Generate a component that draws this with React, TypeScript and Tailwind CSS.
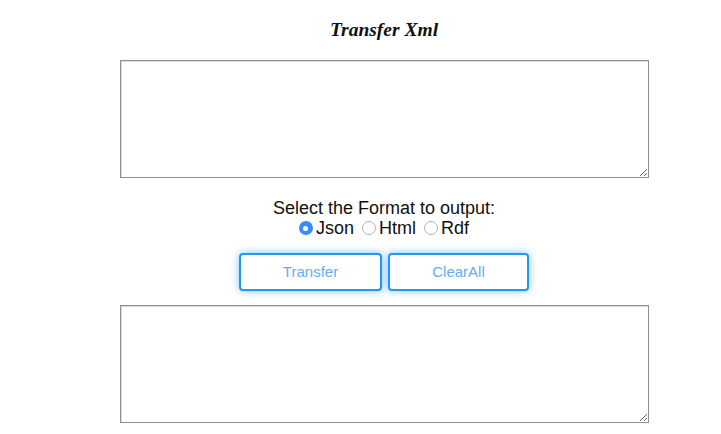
import React, { useState } from 'react';

const formats = ['Json', 'Html', 'Rdf'];

const App = () => {
    const [format, setFormat] = useState('Json');
    const [input, setInput] = useState('');
    const [output, setOutput] = useState('');

    return (
        <div className="w-[721px] h-[434px] bg-white overflow-hidden" style={{ fontFamily: '"Liberation Sans", Arial, sans-serif' }}>
            <div className="ml-[119px] w-[530px] flex flex-col items-center">
                <h1 className="mt-[18px] h-[24px] leading-[24px] text-[19.5px] font-bold italic text-[#111] font-['Liberation_Serif',serif]">
                    Transfer Xml
                </h1>
                <textarea
                    value={input}
                    onChange={(e) => setInput(e.target.value)}
                    className="mt-[18px] w-[529px] h-[118px] border border-[#8f8f8f] shadow-[inset_1px_1px_1px_rgba(0,0,0,0.15)] bg-white block"
                />
                <p className="mt-[20px] text-[18px] leading-[20px] text-[#111]">Select the Format to output:</p>
                <div className="flex items-center gap-[8px] text-[18px] leading-[20px] text-[#111]">
                    {formats.map((f) => (
                        <label key={f} className="flex items-center gap-[3px]">
                            <span
                                onClick={() => setFormat(f)}
                                className={`w-[14px] h-[14px] rounded-full flex items-center justify-center ${format === f ? 'bg-[#3b8df6]' : 'border border-[#b5b5b5] bg-white'}`}
                            >
                                {format === f && <span className="w-[5px] h-[5px] rounded-full bg-white" />}
                            </span>
                            {f}
                        </label>
                    ))}
                </div>
                <div className="mt-[15px] flex gap-[6px]">
                    <button className="w-[143px] h-[38px] rounded-[4px] border-2 border-[#2196f3] bg-white text-[15px] text-[#64acf3] shadow-[0_0_8px_rgba(33,150,243,0.55)]">
                        Transfer
                    </button>
                    <button onClick={() => { setInput(''); setOutput(''); }} className="w-[141px] h-[38px] rounded-[4px] border-2 border-[#2196f3] bg-white text-[15px] text-[#64acf3] shadow-[0_0_8px_rgba(33,150,243,0.55)]">
                        ClearAll
                    </button>
                </div>
                <textarea
                    value={output}
                    onChange={(e) => setOutput(e.target.value)}
                    className="mt-[14px] w-[529px] h-[118px] border border-[#8f8f8f] shadow-[inset_1px_1px_1px_rgba(0,0,0,0.15)] bg-white block"
                />
            </div>
        </div>
    );
};

export default App;
